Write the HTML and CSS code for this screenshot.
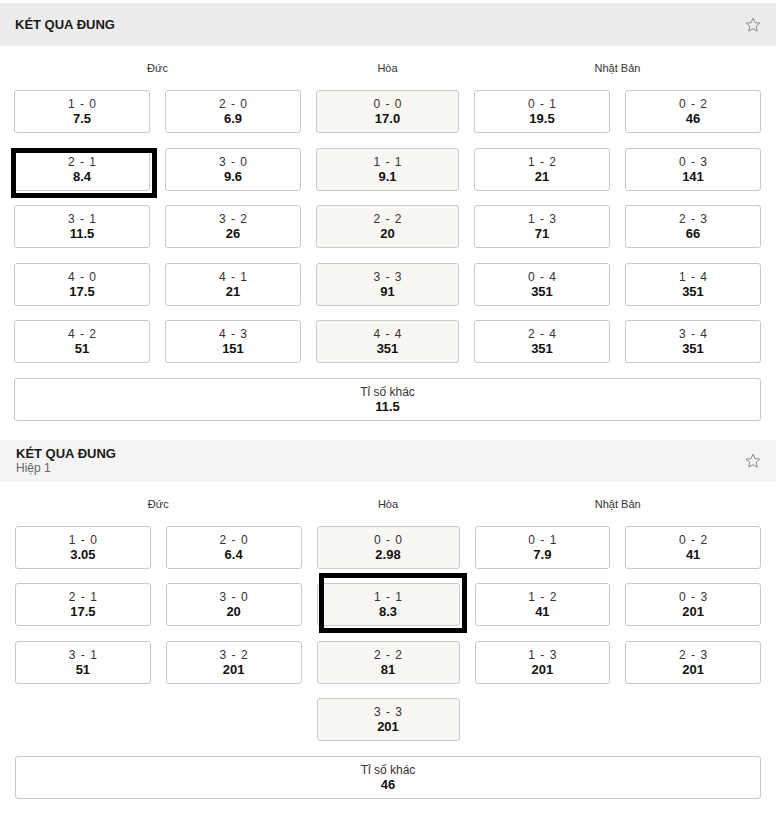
FILE: index.html
```html
<!DOCTYPE html>
<html lang="vi">
<head>
    <meta charset="UTF-8">
    <title>Kết quả đúng</title>
    <link rel="stylesheet" href="styles.css">
</head>
<body>

<div class="page">

    <!-- Full time correct score -->
    <section class="market">
        <div class="market-head">
            <div class="market-title">
                <h2>KÉT QUA ĐUNG</h2>
            </div>
            <svg class="star" viewBox="0 0 16 16" width="16" height="16">
                <path d="M8 1.2 L10 5.6 L14.8 6.1 L11.2 9.3 L12.2 14.1 L8 11.7 L3.8 14.1 L4.8 9.3 L1.2 6.1 L6 5.6 Z"/>
            </svg>
        </div>

        <div class="odds-grid">
            <div class="col-label span-2">Đức</div>
            <div class="col-label">Hòa</div>
            <div class="col-label span-2">Nhật Bản</div>

            <a class="pick"><span class="score">1 - 0</span><b>7.5</b></a>
            <a class="pick"><span class="score">2 - 0</span><b>6.9</b></a>
            <a class="pick draw"><span class="score">0 - 0</span><b>17.0</b></a>
            <a class="pick"><span class="score">0 - 1</span><b>19.5</b></a>
            <a class="pick"><span class="score">0 - 2</span><b>46</b></a>

            <a class="pick"><span class="score">2 - 1</span><b>8.4</b><i class="mark mark-one"></i></a>
            <a class="pick"><span class="score">3 - 0</span><b>9.6</b></a>
            <a class="pick draw"><span class="score">1 - 1</span><b>9.1</b></a>
            <a class="pick"><span class="score">1 - 2</span><b>21</b></a>
            <a class="pick"><span class="score">0 - 3</span><b>141</b></a>

            <a class="pick"><span class="score">3 - 1</span><b>11.5</b></a>
            <a class="pick"><span class="score">3 - 2</span><b>26</b></a>
            <a class="pick draw"><span class="score">2 - 2</span><b>20</b></a>
            <a class="pick"><span class="score">1 - 3</span><b>71</b></a>
            <a class="pick"><span class="score">2 - 3</span><b>66</b></a>

            <a class="pick"><span class="score">4 - 0</span><b>17.5</b></a>
            <a class="pick"><span class="score">4 - 1</span><b>21</b></a>
            <a class="pick draw"><span class="score">3 - 3</span><b>91</b></a>
            <a class="pick"><span class="score">0 - 4</span><b>351</b></a>
            <a class="pick"><span class="score">1 - 4</span><b>351</b></a>

            <a class="pick"><span class="score">4 - 2</span><b>51</b></a>
            <a class="pick"><span class="score">4 - 3</span><b>151</b></a>
            <a class="pick draw"><span class="score">4 - 4</span><b>351</b></a>
            <a class="pick"><span class="score">2 - 4</span><b>351</b></a>
            <a class="pick"><span class="score">3 - 4</span><b>351</b></a>

            <a class="pick other"><span class="score">Tỉ số khác</span><b>11.5</b></a>
        </div>
    </section>

    <!-- First half correct score -->
    <section class="market half">
        <div class="market-head">
            <div class="market-title">
                <h2>KÉT QUA ĐUNG</h2>
                <span class="sub">Hiệp 1</span>
            </div>
            <svg class="star" viewBox="0 0 16 16" width="16" height="16">
                <path d="M8 1.2 L10 5.6 L14.8 6.1 L11.2 9.3 L12.2 14.1 L8 11.7 L3.8 14.1 L4.8 9.3 L1.2 6.1 L6 5.6 Z"/>
            </svg>
        </div>

        <div class="odds-grid">
            <div class="col-label span-2">Đức</div>
            <div class="col-label">Hòa</div>
            <div class="col-label span-2">Nhật Bản</div>

            <a class="pick"><span class="score">1 - 0</span><b>3.05</b></a>
            <a class="pick"><span class="score">2 - 0</span><b>6.4</b></a>
            <a class="pick draw"><span class="score">0 - 0</span><b>2.98</b></a>
            <a class="pick"><span class="score">0 - 1</span><b>7.9</b></a>
            <a class="pick"><span class="score">0 - 2</span><b>41</b></a>

            <a class="pick"><span class="score">2 - 1</span><b>17.5</b></a>
            <a class="pick"><span class="score">3 - 0</span><b>20</b></a>
            <a class="pick draw"><span class="score">1 - 1</span><b>8.3</b><i class="mark mark-two"></i></a>
            <a class="pick"><span class="score">1 - 2</span><b>41</b></a>
            <a class="pick"><span class="score">0 - 3</span><b>201</b></a>

            <a class="pick"><span class="score">3 - 1</span><b>51</b></a>
            <a class="pick"><span class="score">3 - 2</span><b>201</b></a>
            <a class="pick draw"><span class="score">2 - 2</span><b>81</b></a>
            <a class="pick"><span class="score">1 - 3</span><b>201</b></a>
            <a class="pick"><span class="score">2 - 3</span><b>201</b></a>

            <a class="pick draw mid"><span class="score">3 - 3</span><b>201</b></a>

            <a class="pick other"><span class="score">Tỉ số khác</span><b>46</b></a>
        </div>
    </section>

</div>

</body>
</html>
```

FILE: styles.css
```css
body {
    margin: 0;
    background: #fff;
    font-family: "Liberation Sans", Arial, sans-serif;
    color: #111;
}

.page {
    width: 776px;
    padding-top: 3px;
}

.market-head {
    display: flex;
    align-items: center;
    justify-content: space-between;
    height: 43px;
    box-sizing: border-box;
    padding: 0 15px 0 15px;
    background: #ececec;
}

.market.half {
    margin-top: 19px;
}

.market.half .market-head {
    height: 42px;
    background: #f4f4f4;
    padding-left: 16px;
}

.market-title {
    display: flex;
    flex-direction: column;
}

.market-title h2 {
    margin: 0;
    font-size: 13px;
    line-height: 15px;
    font-weight: bold;
    color: #1a1a1a;
}

.market-title .sub {
    font-size: 12px;
    line-height: 15px;
    color: #666;
}

.star {
    fill: none;
    stroke: #8a8a8a;
    stroke-width: 1;
    stroke-linejoin: round;
}

.odds-grid {
    display: grid;
    grid-template-columns: 1fr 1fr 143px 1fr 1fr;
    column-gap: 15px;
    row-gap: 14.5px;
    padding: 0 15px 0 14px;
}

.market.half .odds-grid {
    padding-left: 15px;
}

.col-label {
    height: 44px;
    line-height: 44px;
    margin-bottom: -14.5px;
    text-align: center;
    font-size: 11px;
    color: #333;
}

.span-2 {
    grid-column: span 2;
}

.pick {
    position: relative;
    height: 43px;
    box-sizing: border-box;
    display: flex;
    flex-direction: column;
    align-items: center;
    justify-content: center;
    border: 1px solid #c9c9c9;
    border-radius: 3px;
    background: #fff;
    cursor: pointer;
}

.pick.draw {
    background: #f8f7f4;
}

.pick.mid {
    grid-column: 3;
}

.pick.other {
    grid-column: 1 / -1;
}

.score {
    font-size: 12px;
    line-height: 14px;
    color: #333;
    word-spacing: 2px;
}

.pick.other .score {
    word-spacing: 0;
}

.pick b {
    font-size: 13px;
    line-height: 15px;
    color: #111;
}

/* highlight frames drawn on top of a pick */
.mark {
    position: absolute;
    border: 5px solid #000;
    box-sizing: border-box;
    pointer-events: none;
}

.mark-one {
    left: -4px;
    top: -1px;
    width: 146px;
    height: 50px;
}

.mark-two {
    left: 1px;
    top: -11px;
    width: 148px;
    height: 60px;
}
```
